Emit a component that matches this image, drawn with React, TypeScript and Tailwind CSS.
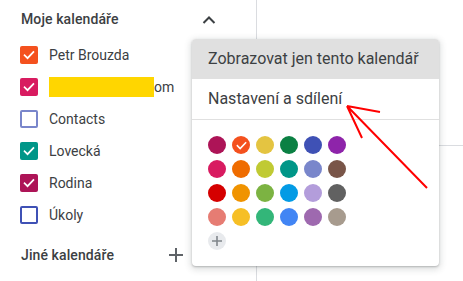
import React from "react";

const Check = ({ size = 14 }: { size?: number }) => (
  <svg width={size} height={size} viewBox="0 0 24 24" fill="none">
    <path d="M4.5 12.5l5 5L19.5 7" stroke="white" strokeWidth="3" strokeLinecap="square" />
  </svg>
);

const Box = ({ color, checked }: { color: string; checked: boolean }) => (
  <div
    className="w-[18px] h-[18px] rounded-[2px] flex items-center justify-center box-border"
    style={checked ? { background: color } : { border: `2px solid ${color}` }}
  >
    {checked && <Check />}
  </div>
);

const rows: { label: React.ReactNode; color: string; checked: boolean }[] = [
  { label: "Petr Brouzda", color: "#f4511e", checked: true },
  {
    label: (
      <span className="flex items-center">
        <span className="inline-block w-[105px] h-[20px] bg-[#ffd600]" />
        <span>om</span>
      </span>
    ),
    color: "#d81b60",
    checked: true,
  },
  { label: "Contacts", color: "#7986cb", checked: false },
  { label: "Lovecká", color: "#009688", checked: true },
  { label: "Rodina", color: "#ad1457", checked: true },
  { label: "Úkoly", color: "#3f51b5", checked: false },
];

const palette = [
  ["#ad1457", "#f4511e", "#e4c441", "#0b8043", "#3f51b5", "#8e24aa"],
  ["#d81b60", "#ef6c00", "#c0ca33", "#009688", "#7986cb", "#795548"],
  ["#d50000", "#f09300", "#7cb342", "#039be5", "#b39ddb", "#616161"],
  ["#e67c73", "#f6bf26", "#33b679", "#4285f4", "#9e69af", "#a79b8e"],
];

export default function App() {
  return (
    <div
      className="relative w-[463px] h-[281px] overflow-hidden bg-white text-[#3c4043]"
      style={{ fontFamily: "Roboto, 'Liberation Sans', sans-serif" }}
    >
      <div className="flex h-full">
        <div className="w-[257px] shrink-0 border-r border-[#dadce0]">
          <div className="h-[39px] flex items-center justify-between pl-[21px] pr-[35px]">
            <span className="text-[14px] font-medium tracking-[0.1px]">Moje kalendáře</span>
            <svg width="24" height="24" viewBox="0 0 24 24" fill="none">
              <path d="M6.5 15l5.5-5.5 5.5 5.5" stroke="#3c4043" strokeWidth="2" />
            </svg>
          </div>
          <div className="flex flex-col">
            {rows.map((r, i) => (
              <div key={i} className="h-[32px] flex items-center pl-[20px] gap-[11px] text-[14px]">
                <Box color={r.color} checked={r.checked} />
                {r.label}
              </div>
            ))}
          </div>
          <div className="mt-[8px] h-[32px] flex items-center justify-between pl-[21px] pr-[68px]">
            <span className="text-[14px] font-medium tracking-[0.1px]">Jiné kalendáře</span>
            <svg width="24" height="24" viewBox="0 0 24 24" fill="none">
              <path d="M12 5v14M5 12h14" stroke="#5f6368" strokeWidth="2" />
            </svg>
          </div>
        </div>
        <div className="flex-1">
          <div className="h-[146px] border-b border-[#dadce0]" />
        </div>
      </div>

      <div className="absolute left-[192px] top-[39px] w-[247px] bg-white rounded-[4px] shadow-[0_2px_6px_2px_rgba(60,64,67,0.15),0_1px_2px_0_rgba(60,64,67,0.3)] overflow-hidden">
        <div className="h-[40px] flex items-center px-[16px] bg-[#e0e0e0] text-[16px]">
          Zobrazovat jen tento kalendář
        </div>
        <div className="h-[40px] flex items-center px-[16px] text-[16px]">Nastavení a sdílení</div>
        <div className="border-t border-[#e0e0e0] px-[16px] pt-[16px] pb-[16px]">
          <div className="flex flex-col gap-[6px]">
            {palette.map((row, ri) => (
              <div key={ri} className="flex gap-[6px]">
                {row.map((c, ci) => (
                  <div
                    key={ci}
                    className="w-[18px] h-[18px] rounded-full flex items-center justify-center"
                    style={{ background: c }}
                  >
                    {ri === 0 && ci === 1 && <Check size={13} />}
                  </div>
                ))}
              </div>
            ))}
            <div className="w-[18px] h-[18px] rounded-full bg-[#e8eaed] flex items-center justify-center">
              <svg width="12" height="12" viewBox="0 0 12 12" fill="none">
                <path d="M6 1v10M1 6h10" stroke="#80868b" strokeWidth="1.6" />
              </svg>
            </div>
          </div>
        </div>
      </div>

      <svg className="absolute left-0 top-0 pointer-events-none" width="463" height="281" viewBox="0 0 463 281" fill="none">
        <path d="M347 106L380 112M347 106L362 138M347 106L427 188" stroke="#ff0000" strokeWidth="2" />
      </svg>
    </div>
  );
}
